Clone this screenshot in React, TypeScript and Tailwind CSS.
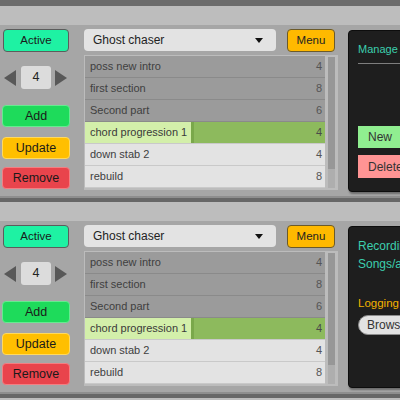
import React from "react";

interface Clip {
  name: string;
  bars: number;
  tone: "dark" | "light" | "selected";
}

const clips: Clip[] = [
  { name: "poss new intro", bars: 4, tone: "dark" },
  { name: "first section", bars: 8, tone: "dark" },
  { name: "Second part", bars: 6, tone: "dark" },
  { name: "chord progression 1", bars: 4, tone: "selected" },
  { name: "down stab 2", bars: 4, tone: "light" },
  { name: "rebuild", bars: 8, tone: "light" },
];

const Arrow = ({ dir }: { dir: "left" | "right" }) => (
  <svg width="12" height="16" viewBox="0 0 12 16">
    {dir === "left" ? (
      <polygon points="12,0 0,8 12,16" fill="#585858" />
    ) : (
      <polygon points="0,0 12,8 0,16" fill="#585858" />
    )}
  </svg>
);

const ClipRow = ({ clip }: { clip: Clip }) => {
  if (clip.tone === "selected") {
    return (
      <div className="flex h-[22px] border-b border-[#c9c9c9] bg-[#8dba5d] text-[11px] text-[#3a3a3a]">
        <div className="flex w-[109px] items-center whitespace-nowrap border-r-[3px] border-[#7aa84b] bg-[#d3efaa] pl-[5px]">
          {clip.name}
        </div>
        <div className="flex flex-1 items-center justify-end pr-[3px] text-[#4a4a4a]">{clip.bars}</div>
      </div>
    );
  }
  const dark = clip.tone === "dark";
  return (
    <div
      className={
        dark
          ? "flex h-[22px] items-center justify-between border-b border-[#8a8a8a] bg-[#9b9b9b] pl-[5px] pr-[3px] text-[11px] text-[#404040]"
          : "flex h-[22px] items-center justify-between border-b border-[#c9c9c9] bg-[#e3e3e3] pl-[5px] pr-[3px] text-[11px] text-[#404040]"
      }
    >
      <span>{clip.name}</span>
      <span className="text-[#555]">{clip.bars}</span>
    </div>
  );
};

const ManageBox = () => (
  <div className="flex flex-col pl-[9px] pt-[11px]">
    <div className="whitespace-nowrap text-[11px] leading-[14px] text-[#3ccfae]">Manage songs</div>
    <div className="mt-[7px] h-px bg-[#7e7e7e]" />
    <div className="mt-[62px] flex h-[22px] items-center bg-[#90ee90] pl-[10px] text-[12px] text-[#333]">New</div>
    <div className="mt-[7px] flex h-[23px] items-center bg-[#ff9494] pl-[10px] text-[12px] text-[#333]">Delete</div>
  </div>
);

const SettingsBox = () => (
  <div className="flex flex-col pl-[9px] pt-[10px]">
    <div className="whitespace-nowrap text-[12px] leading-[18px] text-[#3ccfae]">
      Recording folder
      <br />
      Songs/archive
    </div>
    <div className="mt-[24px] text-[11.5px] leading-[13px] text-[#f3b300]">Logging</div>
    <div className="mt-[5px] flex h-[20px] w-[80px] items-center rounded-full border border-[#8c8c8c] bg-[#e2e2e2] pl-[8px] text-[12px] text-[#333]">
      Browse
    </div>
  </div>
);

const Panel = ({ side }: { side: "manage" | "settings" }) => (
  <div>
    <div className="h-[19px] bg-[#bdbdbd]" />
    <div className="flex h-[171px] pt-[4px]">
      {/* left controls */}
      <div className="flex w-[70px] shrink-0 flex-col pl-[2px]">
        <button className="mx-px h-[23px] rounded-[4px] border border-[#5c5c5c] bg-[#1ef2a3] text-[11.5px] text-[#1a1a1a]">
          Active
        </button>
        <div className="mt-[14px] flex items-center">
          <div className="ml-[2px]">
            <Arrow dir="left" />
          </div>
          <div className="ml-[5px] flex h-[23px] w-[30px] items-center justify-center rounded-[3px] bg-[#dcdcdc] text-[12.5px] text-[#222]">
            4
          </div>
          <div className="ml-[4px]">
            <Arrow dir="right" />
          </div>
        </div>
        <button className="mt-[16px] h-[22px] rounded-[4px] border border-[#66ea90] bg-[#1edb5b] text-[12.5px] text-[#1a1a1a]">
          Add
        </button>
        <button className="mt-[10px] h-[22px] rounded-[4px] border border-[#ffd95e] bg-[#ffbf00] text-[12.5px] text-[#1a1a1a]">
          Update
        </button>
        <button className="mt-[8px] h-[22px] rounded-[4px] border border-[#f37e82] bg-[#e9444c] text-[12.5px] text-[#1a1a1a]">
          Remove
        </button>
      </div>

      {/* song selector + clip list */}
      <div className="ml-[14px] flex w-[254px] shrink-0 flex-col">
        <div className="flex h-[22px] gap-[11px]">
          <div className="flex w-[192px] items-center justify-between rounded-[4px] bg-[#e3e3e3] pl-[9px] pr-[13px] text-[12px] text-[#222]">
            <span>Ghost chaser</span>
            <svg width="8" height="5" viewBox="0 0 8 5">
              <polygon points="0,0 8,0 4,5" fill="#111" />
            </svg>
          </div>
          <button className="h-[23px] w-[48px] rounded-[4px] border border-[#6b5a2a] bg-[#ffb900] text-[11.5px] text-[#222]">
            Menu
          </button>
        </div>
        <div className="mt-[4px] flex h-[135px] bg-[#bcbcbc] pl-[1px] pt-[1px]">
          <div className="w-[240px]">
            {clips.map((c) => (
              <ClipRow key={c.name} clip={c} />
            ))}
          </div>
          <div className="ml-[3px] mt-px h-[131px] w-[7px] bg-[#aeaeae]">
            <div className="h-[112px] bg-[#979797]" />
          </div>
        </div>
      </div>

      {/* dark side box */}
      <div className="ml-[10px] mt-px h-[162px] w-[120px] shrink-0 overflow-hidden rounded-[4px] border border-[#0d0d0d] bg-[#1e1e1e] shadow-[1px_2px_2px_rgba(0,0,0,0.35)]">
        {side === "manage" ? <ManageBox /> : <SettingsBox />}
      </div>
    </div>
  </div>
);

export default function App() {
  return (
    <div className="h-[400px] w-[400px] overflow-hidden bg-[#a6a6a6] font-['Liberation_Sans',Arial,sans-serif]">
      <div className="h-[6px] bg-[#6c6c6c]" />
      <Panel side="manage" />
      <div className="h-[6px] border-t-2 border-[#8e8e8e] bg-[#676767]" />
      <Panel side="settings" />
      <div className="h-[6px] border-t-2 border-[#8e8e8e] bg-[#676767]" />
      <div className="h-[10px] bg-[#bdbdbd]" />
    </div>
  );
}
